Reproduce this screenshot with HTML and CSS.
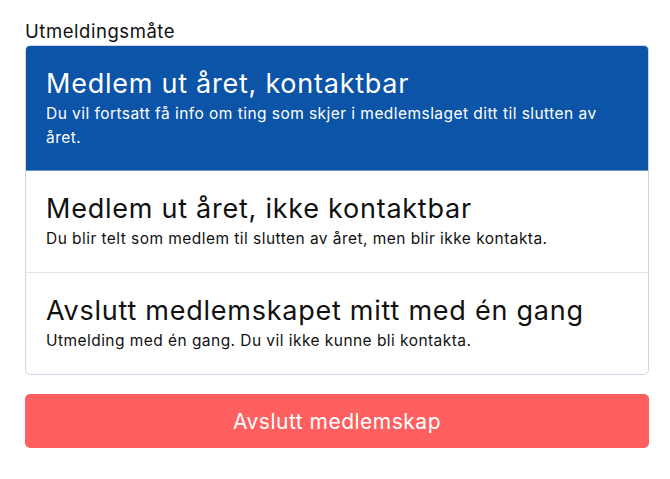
FILE: index.html
```html
<!DOCTYPE html>
<html lang="no">
<head>
  <meta charset="UTF-8">
  <meta name="viewport" content="width=device-width, initial-scale=1.0">
  <title>Utmelding</title>
  <link rel="stylesheet" href="styles.css">
</head>
<body>
<div class="container">
  <label class="field-label">Utmeldingsmåte</label>
  <div class="option-list">
    <div class="option active">
      <h2>Medlem ut året, kontaktbar</h2>
      <p>Du vil fortsatt få info om ting som skjer i medlemslaget ditt til slutten av året.</p>
    </div>
    <div class="option">
      <h2>Medlem ut året, ikke kontaktbar</h2>
      <p>Du blir telt som medlem til slutten av året, men blir ikke kontakta.</p>
    </div>
    <div class="option">
      <h2>Avslutt medlemskapet mitt med én gang</h2>
      <p>Utmelding med én gang. Du vil ikke kunne bli kontakta.</p>
    </div>
  </div>
  <button class="end-button">Avslutt medlemskap</button>
</div>
</body>
</html>
```

FILE: styles.css
```css
body {
  font-family: 'Inter', 'Noto Sans', sans-serif;
  margin: 0;
  padding: 0;
  background: #fff;
  color: #111;
}

.container {
  padding: 19px 21px 0 25px;
}

.field-label {
  display: block;
  font-size: 18.5px;
  letter-spacing: 0.55px;
  line-height: 24px;
  margin-bottom: 2px;
}

.option-list {
  border: 1px solid #cdd8e6;
  border-radius: 5px;
  overflow: hidden;
}

.option {
  padding: 20px 20px 21px;
  border-top: 1px solid #e3e8ef;
}

.option:first-child {
  border-top: none;
}

.option.active {
  padding-bottom: 20px;
  background: #0b54a7;
  color: #fff;
  border-bottom: 1px solid #6c95c9;
}

.option.active + .option {
  border-top: none;
}

.option h2 {
  margin: 0;
  font-size: 27px;
  font-weight: 400;
  letter-spacing: 0.75px;
  line-height: 36px;
}

.option p {
  margin: 0;
  font-size: 15.5px;
  letter-spacing: 0.45px;
  line-height: 24px;
}

.end-button {
  display: block;
  width: 100%;
  margin-top: 19px;
  height: 54px;
  border: none;
  border-radius: 5px;
  background: #ff5f5f;
  color: #fff;
  font-family: inherit;
  font-size: 21px;
  letter-spacing: 0.5px;
}
```
